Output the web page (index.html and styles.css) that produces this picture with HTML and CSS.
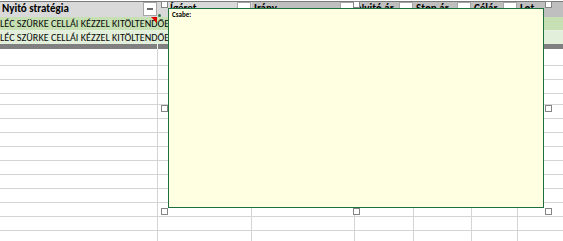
FILE: index.html
```html
<!DOCTYPE html>
<html>
<head>
<meta charset="utf-8">
<link rel="stylesheet" href="styles.css">
</head>
<body>
<div class="sheet">
  <div class="hdr">
    <div class="hc light"><span class="ht">Nyitó stratégia</span><span class="dd"></span></div>
    <div class="hc light"><span class="ht pad">Ígéret</span><span class="dd"></span></div>
    <div class="hc"><span class="ht">Irány</span><span class="dd"></span></div>
    <div class="hc"><span class="ht">Nyitó ár</span><span class="dd"></span></div>
    <div class="hc"><span class="ht">Stop ár</span><span class="dd"></span></div>
    <div class="hc"><span class="ht">Célár</span><span class="dd"></span></div>
    <div class="hc"><span class="ht">Lot</span></div>
  </div>
  <div class="grow g1"><span class="gt">LÉC SZÜRKE CELLÁI KÉZZEL KITÖLTENDŐEK</span></div>
  <div class="grow g2"><span class="gt">LÉC SZÜRKE CELLÁI KÉZZEL KITÖLTENDŐEK</span></div>
  <div class="bar"><span class="gap"></span></div>
  <div class="grid">
    <div class="row tall"><i></i><i></i><i></i><i></i><i></i><i></i><i></i></div>
    <div class="row"><i></i><i></i><i></i><i></i><i></i><i></i><i></i></div>
    <div class="row"><i></i><i></i><i></i><i></i><i></i><i></i><i></i></div>
    <div class="row short"><i></i><i></i><i></i><i></i><i></i><i></i><i></i></div>
    <div class="row"><i></i><i></i><i></i><i></i><i></i><i></i><i></i></div>
    <div class="row"><i></i><i></i><i></i><i></i><i></i><i></i><i></i></div>
    <div class="row"><i></i><i></i><i></i><i></i><i></i><i></i><i></i></div>
    <div class="row"><i></i><i></i><i></i><i></i><i></i><i></i><i></i></div>
    <div class="row"><i></i><i></i><i></i><i></i><i></i><i></i><i></i></div>
    <div class="row"><i></i><i></i><i></i><i></i><i></i><i></i><i></i></div>
    <div class="row"><i></i><i></i><i></i><i></i><i></i><i></i><i></i></div>
    <div class="row"><i></i><i></i><i></i><i></i><i></i><i></i><i></i></div>
    <div class="row"><i></i><i></i><i></i><i></i><i></i><i></i><i></i></div>
    <div class="row last"><i></i><i></i><i></i><i></i><i></i><i></i><i></i></div>
  </div>

  <span class="tri"></span>
  <span class="dot"></span>
  <div class="comment"><b>Csabe:</b></div>
  <span class="hd h-tl"></span>
  <span class="hd h-tm"></span>
  <span class="hd h-tr"></span>
  <span class="hd h-ml"></span>
  <span class="hd h-mr"></span>
  <span class="hd h-bl"></span>
  <span class="hd h-bm"></span>
  <span class="hd h-br"></span>
</div>
</body>
</html>
```
FILE: styles.css
```css
* { box-sizing: border-box; }
html, body { margin: 0; padding: 0; background: #fff; }
.sheet {
  position: relative;
  width: 563px;
  height: 241px;
  overflow: hidden;
  padding-top: 1px;
  font-family: Carlito, "Liberation Sans", Arial, sans-serif;
  color: #000;
}
.hdr {
  display: grid;
  grid-template-columns: 158px 94px 103px 59px 58px 46px 1fr;
  height: 16px;
  border-top: 1px solid #7a7a7a;
}
.hc {
  position: relative;
  display: flex;
  align-items: flex-start;
  background: #bfbfbf;
  overflow: hidden;
}
.hc.light { background: #d9d9d9; }
.ht {
  flex: 1;
  font-weight: bold;
  font-size: 11px;
  line-height: 13px;
  padding-left: 2px;
  white-space: nowrap;
  overflow: hidden;
  color: #000;
}
.ht.pad { padding-left: 12px; }
.dd {
  position: relative;
  flex: none;
  width: 14px;
  height: 14px;
  margin-right: 1px;
  background: #fff;
  border: 1px solid #a6a6a6;
}
.dd::after {
  content: "";
  position: absolute;
  left: 3px;
  top: 5px;
  width: 6px;
  height: 2px;
  background: #6a6a6a;
}
.grow {
  height: 13px;
  overflow: hidden;
  white-space: nowrap;
  display: flex;
  align-items: center;
}
.g1 { background: #c6e0b4; border-bottom: 1px solid #e8f1e1; height: 14px; }
.g2 { background: #e2efda; height: 13px; }
.gt {
  font-size: 10.2px;
  letter-spacing: 0;
  color: #0a0a0a;
  padding-left: 0;
}
.bar {
  height: 5px;
  background: #808080;
  display: flex;
}
.gap {
  width: 1px;
  margin-left: 157px;
  background: #f0f0f0;
}
.grid { display: flex; flex-direction: column; }
.row {
  display: grid;
  grid-template-columns: 158px 94px 103px 59px 58px 46px 1fr;
  height: 14px;
  border-bottom: 1px solid #d4d4d4;
}
.row.tall { height: 17px; }
.row.short { height: 11px; }
.row.last { border-bottom: none; height: 20px; }
.row i { border-right: 1px solid #d4d4d4; }
.row i:last-child { border-right: none; }

.comment {
  position: absolute;
  left: 168px;
  top: 8px;
  width: 376px;
  height: 200px;
  background: #ffffe1;
  border: 1px solid #1f6f43;
  padding: 2px 0 0 3px;
  font-family: Carlito, "Liberation Sans", Arial, sans-serif;
  font-size: 7px;
  line-height: 8px;
}
.tri {
  position: absolute;
  left: 151px;
  top: 17px;
  width: 0;
  height: 0;
  border-top: 6px solid #e00000;
  border-left: 6px solid transparent;
}
.dot {
  position: absolute;
  left: 158px;
  top: 14px;
  width: 3px;
  height: 3px;
  border-radius: 50%;
  background: #2a7a4a;
}
.hd {
  position: absolute;
  width: 7px;
  height: 7px;
  background: #fff;
  border: 1px solid #858585;
}
.h-tl { left: 161px; top: 1px; }
.h-tm { left: 353px; top: 1px; }
.h-tr { left: 545px; top: 1px; }
.h-ml { left: 161px; top: 105px; }
.h-mr { left: 545px; top: 105px; }
.h-bl { left: 161px; top: 208px; }
.h-bm { left: 353px; top: 208px; }
.h-br { left: 545px; top: 208px; }
```
